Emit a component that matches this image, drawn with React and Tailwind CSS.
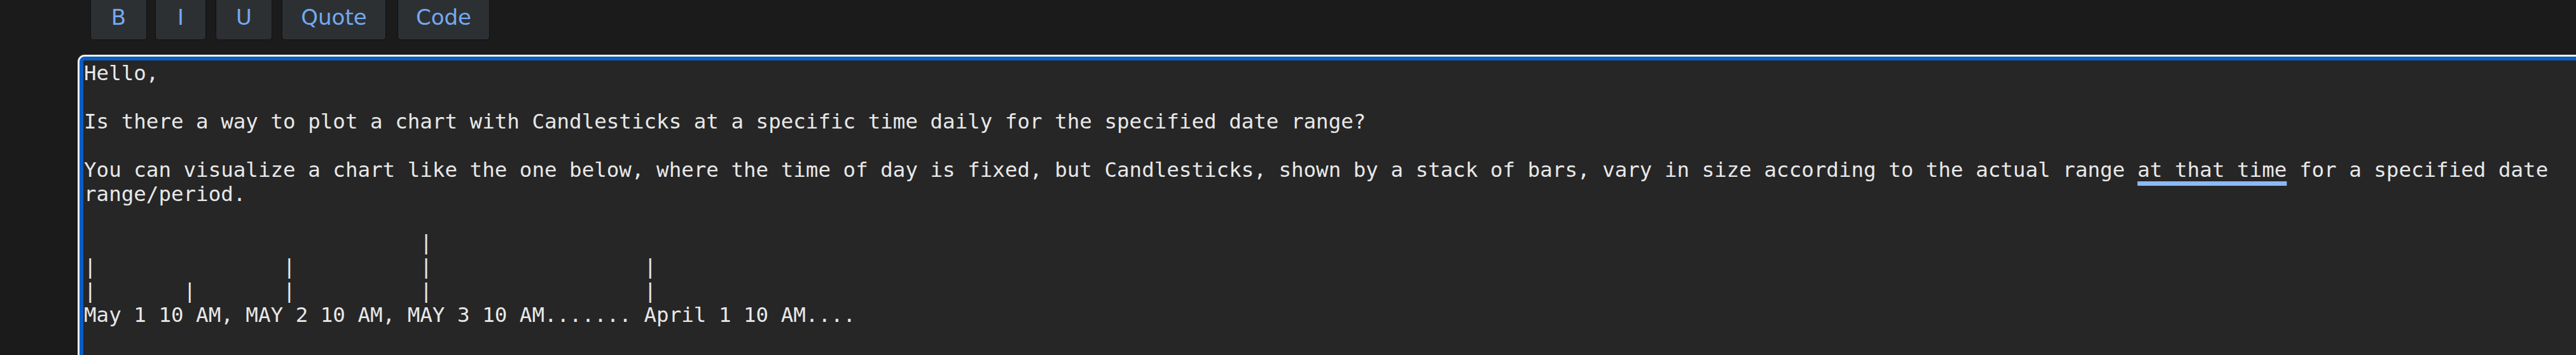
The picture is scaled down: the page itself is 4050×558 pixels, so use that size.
export default function App() {
  const buttons = [
    { t: "B", c: "w-[89px]" },
    { t: "I", c: "w-[80px] ml-[13px]" },
    { t: "U", c: "w-[89px] ml-[15px]" },
    { t: "Quote", c: "w-[164px] ml-[15px]" },
    { t: "Code", c: "w-[145px] ml-[18px]" },
  ];
  const line8 = "|" + " ".repeat(15) + "|" + " ".repeat(10) + "|" + " ".repeat(17) + "|";
  const line9 = "|" + " ".repeat(7) + "|" + " ".repeat(7) + "|" + " ".repeat(10) + "|" + " ".repeat(17) + "|";
  const line7 = " ".repeat(27) + "|";
  return (
    <div className="w-[4050px] h-[558px] overflow-hidden bg-[#1b1b1b]">
      <div className="flex pl-[142px] -mt-[8px]">
        {buttons.map((b) => (
          <div
            key={b.t}
            className={
              "h-[71px] shrink-0 flex items-center justify-center rounded-[5px] border border-[#101010] bg-[#2d3033] text-[#74a9ef] text-[34px] font-['DejaVu_Sans',sans-serif] " +
              b.c
            }
          >
            {b.t}
          </div>
        ))}
      </div>
      <div className="mt-[26px] ml-[125px] w-[4000px] h-[500px] rounded-[8px] border-[6px] border-[#0b5dc5] shadow-[0_0_0_3px_#f2f2f2] bg-[#262626] p-[1px]">
        <div className="whitespace-pre-wrap text-[32.5px] leading-[38px] text-[#e8e8e8] font-['DejaVu_Sans_Mono',monospace] w-[3918px]">
          {"Hello,\n\nIs there a way to plot a chart with Candlesticks at a specific time daily for the specified date range?\n\nYou can visualize a chart like the one below, where the time of day is fixed, but Candlesticks, shown by a stack of bars, vary in size according to the actual range "}
          <span className="underline decoration-[#8ab8f8] decoration-[7px] underline-offset-[7px]">at that time</span>
          {" for a specified date range/period.\n\n" + line7 + "\n" + line8 + "\n" + line9 + "\nMay 1 10 AM, MAY 2 10 AM, MAY 3 10 AM....... April 1 10 AM...."}
        </div>
      </div>
    </div>
  );
}
